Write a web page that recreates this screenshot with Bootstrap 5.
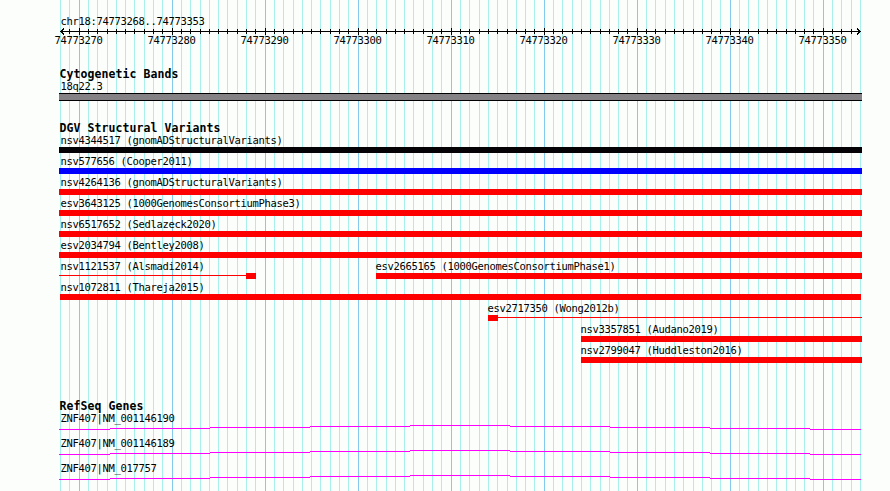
<!DOCTYPE html>
<html lang="en">
<head>
<meta charset="utf-8">
<title>chr18:74773268..74773353</title>
<meta name="viewport" content="width=device-width, initial-scale=1">
<link href="https://cdn.jsdelivr.net/npm/bootstrap@5.3.0/dist/css/bootstrap.min.css" rel="stylesheet">
<style>
body{background:#fcfefc;color:#000;font:10.5px/10px "DejaVu Sans Mono","Liberation Mono",monospace;letter-spacing:-.32px}
.browser{width:890px;height:491px}
.gridlines{left:0;top:0}
.tracks{padding:16px 28px 0 59px}
.tag{height:12px;padding-left:1.5px;white-space:pre}
.tag.flush{padding-left:0;margin-left:-.5px}
.heading{font-size:11.5px;font-weight:700;line-height:11px;letter-spacing:.08px;height:12px;padding-left:.5px;margin:0;white-space:pre}
.axis{height:8px;margin-left:-59px}
.scale-row{height:12px;line-height:8px;margin:0 -28px 0 -4.5px}
.scale-row>span{width:93px;flex:none}
.cyto{height:8px;background:#848284;border:solid #000;border-width:1px 0}
.feature{flex:none;height:21px}
.bar{height:6px}
.bar-red{background:#f00}.bar-blue{background:#00f}.bar-black{background:#040204}
.thin{height:1px;margin-top:2px;background:#f00}
.block{width:10px;height:6px;background:#f00;flex:none}
.gene{height:25px}
</style>
<script src="https://cdn.jsdelivr.net/npm/bootstrap@5.3.0/dist/js/bootstrap.bundle.min.js"></script>
</head>
<body>
<main class="browser position-relative overflow-hidden">
<svg class="gridlines position-absolute" width="890" height="491" shape-rendering="crispEdges"><path id="minor" fill="none" stroke="#a8f0ec"/><path id="major" fill="none" stroke="#84caec"/></svg>
<div class="tracks position-relative d-flex flex-column">
<div class="tag">chr18:74773268..74773353</div>
<svg class="axis" width="890" height="8" shape-rendering="crispEdges" fill="none" stroke="#000"><path d="M60 3.5H861"/><path id="ticks"/><path d="M61 2.5h2M62 1.5h2M63 .5h1M61 4.5h2M62 5.5h2M63 6.5h1M858 2.5h2M857 1.5h2M857 .5h1M858 4.5h2M857 5.5h2M857 6.5h1"/></svg>
<div class="scale-row d-flex"><span>74773270</span><span>74773280</span><span>74773290</span><span>74773300</span><span>74773310</span><span>74773320</span><span>74773330</span><span>74773340</span><span>74773350</span></div>
<h2 class="heading" style="margin-top:21px">Cytogenetic Bands</h2>
<div class="tag">18q22.3</div>
<div class="cyto"></div>
<h2 class="heading" style="margin-top:22px">DGV Structural Variants</h2>
<section>
<div class="feature"><div class="tag">nsv4344517 (gnomADStructuralVariants)</div><div class="bar bar-black"></div></div>
<div class="feature"><div class="tag">nsv577656 (Cooper2011)</div><div class="bar bar-blue"></div></div>
<div class="feature"><div class="tag">nsv4264136 (gnomADStructuralVariants)</div><div class="bar bar-red"></div></div>
<div class="feature"><div class="tag">esv3643125 (1000GenomesConsortiumPhase3)</div><div class="bar bar-red"></div></div>
<div class="feature"><div class="tag">nsv6517652 (Sedlazeck2020)</div><div class="bar bar-red"></div></div>
<div class="feature"><div class="tag">esv2034794 (Bentley2008)</div><div class="bar bar-red"></div></div>
<div class="d-flex">
<div class="feature" style="width:197px"><div class="tag">nsv1121537 (Alsmadi2014)</div><div class="d-flex"><div class="thin flex-fill"></div><div class="block"></div></div></div>
<div class="feature" style="width:486px;margin-left:120px"><div class="tag flush">esv2665165 (1000GenomesConsortiumPhase1)</div><div class="bar bar-red"></div></div>
</div>
<div class="feature"><div class="tag">nsv1072811 (Thareja2015)</div><div class="bar bar-red" style="margin:0 1px"></div></div>
<div class="feature" style="margin-left:429px"><div class="tag flush">esv2717350 (Wong2012b)</div><div class="d-flex"><div class="block"></div><div class="thin flex-fill"></div></div></div>
<div class="feature" style="margin-left:522px"><div class="tag flush">nsv3357851 (Audano2019)</div><div class="bar bar-red"></div></div>
<div class="feature" style="margin-left:522px"><div class="tag flush">nsv2799047 (Huddleston2016)</div><div class="bar bar-red"></div></div>
</section>
<h2 class="heading" style="margin-top:35px">RefSeq Genes</h2>
<section id="genes">
<div class="gene"><div class="tag">ZNF407|NM_001146190</div></div>
<div class="gene"><div class="tag">ZNF407|NM_001146189</div></div>
<div class="gene"><div class="tag">ZNF407|NM_017757</div></div>
</section>
</div>
</main>
<script>
let minor='',major='',ticks='';
for(let i=0;i<=86;i++){
  const x=Math.round(60+i*800/86), ten=i%10===2;
  if(ten) major+=`M${x+.5} 0V491`; else minor+=`M${x+.5} 0V491`;
  if(i>0&&i<86) ticks+=ten?`M${x+.5} 0V7`:`M${x+.5} 1V6`;
}
document.getElementById('minor').setAttribute('d',minor);
document.getElementById('major').setAttribute('d',major);
document.getElementById('ticks').setAttribute('d',ticks);
// Intron arcs rise one pixel every 100px towards the middle
for(const g of document.querySelectorAll('.gene')){
  g.insertAdjacentHTML('beforeend','<svg class="d-block" width="803" height="10" shape-rendering="crispEdges" fill="none" stroke="#f0f"><path d="M0 4.5H51M51 3.5H151M151 2.5H251M251 1.5H351M351 .5H451M451 1.5H551M551 2.5H651M651 3.5H751M751 4.5H802"/></svg>');
}
</script>
</body>
</html>
